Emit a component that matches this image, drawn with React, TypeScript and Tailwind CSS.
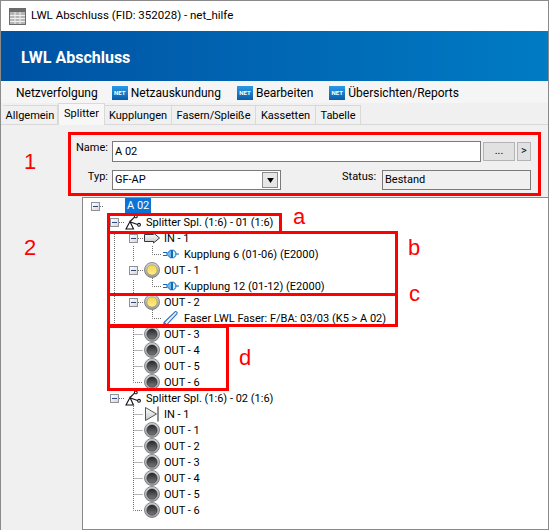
import type { ReactNode } from "react";

type IconKind = "splitter" | "inArrow" | "inTriangle" | "coupling" | "ledOn" | "ledOff" | "fiber";

type TreeRow = {
  level: 1 | 2 | 3;
  label: string;
  icon: IconKind;
  expander?: boolean;
};

const rows: TreeRow[] = [
  { level: 1, label: "Splitter Spl. (1:6) - 01 (1:6)", icon: "splitter", expander: true },
  { level: 2, label: "IN - 1", icon: "inArrow", expander: true },
  { level: 3, label: "Kupplung 6 (01-06) (E2000)", icon: "coupling" },
  { level: 2, label: "OUT - 1", icon: "ledOn", expander: true },
  { level: 3, label: "Kupplung 12 (01-12) (E2000)", icon: "coupling" },
  { level: 2, label: "OUT - 2", icon: "ledOn", expander: true },
  { level: 3, label: "Faser LWL Faser: F/BA: 03/03 (K5 > A 02)", icon: "fiber" },
  { level: 2, label: "OUT - 3", icon: "ledOff" },
  { level: 2, label: "OUT - 4", icon: "ledOff" },
  { level: 2, label: "OUT - 5", icon: "ledOff" },
  { level: 2, label: "OUT - 6", icon: "ledOff" },
  { level: 1, label: "Splitter Spl. (1:6) - 02 (1:6)", icon: "splitter", expander: true },
  { level: 2, label: "IN - 1", icon: "inTriangle" },
  { level: 2, label: "OUT - 1", icon: "ledOff" },
  { level: 2, label: "OUT - 2", icon: "ledOff" },
  { level: 2, label: "OUT - 3", icon: "ledOff" },
  { level: 2, label: "OUT - 4", icon: "ledOff" },
  { level: 2, label: "OUT - 5", icon: "ledOff" },
  { level: 2, label: "OUT - 6", icon: "ledOff" },
];

const indent = { 1: "pl-[27px]", 2: "pl-[46px]", 3: "pl-[80px]" };

function Led({ on }: { on: boolean }) {
  return (
    <svg width="16" height="16" viewBox="0 0 16 16">
      <circle cx="8" cy="8" r="7.5" fill="url(#ledRing)" stroke="#6d6f72" strokeWidth="0.8" />
      <circle cx="8" cy="8" r="5.1" fill={on ? "url(#ledYellow)" : "url(#ledDark)"} stroke={on ? "#a89a45" : "#2b2b2b"} strokeWidth="0.6" />
    </svg>
  );
}

function TreeIcon({ kind }: { kind: IconKind }) {
  switch (kind) {
    case "ledOn":
      return <Led on />;
    case "ledOff":
      return <Led on={false} />;
    case "splitter":
      return (
        <svg width="16" height="16" viewBox="0 0 16 16" fill="none" stroke="#111" strokeWidth="1.1">
          <path d="M1 15 L5 7.5 L8.5 15 Z" fill="#fff" />
          <path d="M5 7.5 L9.5 3.2 M5.5 8 L12.5 10.5" />
          <circle cx="10.8" cy="2.4" r="1.4" fill="#fff" />
          <circle cx="14" cy="10.8" r="1.4" fill="#fff" />
        </svg>
      );
    case "inArrow":
      return (
        <svg width="16" height="16" viewBox="0 0 16 16">
          <path d="M0.5 4.5 H9.5 V3 L15.5 8 L9.5 13 V11.5 H0.5 Z" fill="url(#arrowFill)" stroke="#33363c" strokeWidth="1" />
        </svg>
      );
    case "inTriangle":
      return (
        <svg width="16" height="16" viewBox="0 0 16 16">
          <path d="M1.5 1.5 L12.5 8 L1.5 14.5 Z" fill="url(#arrowFill)" stroke="#555" strokeWidth="1" />
          <path d="M14 0.5 V15.5" stroke="#222" strokeWidth="1" />
        </svg>
      );
    case "coupling":
      return (
        <svg width="16" height="16" viewBox="0 0 16 16">
          <path d="M0 6.5 H4 M0 9.5 H4 M12 8 H16" stroke="#1668b4" strokeWidth="1.1" />
          <path d="M3.5 8 L7.5 4 H8.5 V12 H7.5 Z" fill="#6fbaf0" stroke="#1668b4" strokeWidth="1" />
          <path d="M13 8 C13 5.5 11 4 9.5 4 V12 C11 12 13 10.5 13 8 Z" fill="#d5ecfb" stroke="#1668b4" strokeWidth="1" />
        </svg>
      );
    case "fiber":
      return (
        <svg width="16" height="16" viewBox="0 0 16 16">
          <path d="M1 12.5 L12 1.8 C13 1 14.6 2.4 14 3.6 L3.5 15 H1 Z" fill="#e8f2fb" stroke="#2a6fc0" strokeWidth="1.1" />
          <path d="M1 12.5 L3.5 15" stroke="#2a6fc0" strokeWidth="1.6" />
        </svg>
      );
  }
}

function Expander() {
  return (
    <span className="flex h-[9px] w-[9px] items-center justify-center border border-[#8d9199] bg-linear-to-br from-white to-[#d8d8d8]">
      <span className="h-px w-[5px] bg-[#2c4a80]" />
    </span>
  );
}

function Row({ row }: { row: TreeRow }) {
  return (
    <div className={`flex h-4 items-center ${indent[row.level]}`}>
      {row.level < 3 && (
        <span className="mr-[6px] flex w-[9px] items-center justify-center">{row.expander && <Expander />}</span>
      )}
      <span className="h-4 w-4">
        <TreeIcon kind={row.icon} />
      </span>
      <span className={`translate-y-px whitespace-nowrap ${row.level === 2 ? "ml-[4px]" : "ml-[5px]"}`}>{row.label}</span>
    </div>
  );
}

// dotted tree guides, coordinates are page pixels
function TreeGuides() {
  const d = [
    "M100 206.5H104",
    "M114.5 232V326",
    "M119 222.5H124",
    "M119 398.5H124",
    "M133.5 246V262",
    "M138 238.5H143",
    "M138 270.5H143",
    "M138 302.5H143",
    "M133.5 280V296",
    "M133.5 328V382.5H143",
    "M133.5 334.5H143",
    "M133.5 350.5H143",
    "M133.5 366.5H143",
    "M152.5 246V254.5H162",
    "M152.5 278V286.5H162",
    "M152.5 310V318.5H162",
    "M133.5 406V510.5H143",
    "M133.5 414.5H143",
    "M133.5 430.5H143",
    "M133.5 446.5H143",
    "M133.5 462.5H143",
    "M133.5 478.5H143",
    "M133.5 494.5H143",
  ];
  return (
    <svg className="absolute top-0 left-0" width="466" height="332" viewBox="83 198 466 332" fill="none">
      <defs>
        <linearGradient id="ledRing" x1="0" y1="0" x2="0" y2="1">
          <stop offset="0" stopColor="#d4d6d8" />
          <stop offset="1" stopColor="#9b9da0" />
        </linearGradient>
        <linearGradient id="ledDark" x1="0" y1="0" x2="0" y2="1">
          <stop offset="0" stopColor="#24262a" />
          <stop offset="1" stopColor="#77797d" />
        </linearGradient>
        <linearGradient id="ledYellow" x1="0" y1="0" x2="0" y2="1">
          <stop offset="0" stopColor="#f7d34a" />
          <stop offset="1" stopColor="#fff08f" />
        </linearGradient>
        <linearGradient id="arrowFill" x1="0" y1="0" x2="0" y2="1">
          <stop offset="0" stopColor="#ffffff" />
          <stop offset="1" stopColor="#c4c6c9" />
        </linearGradient>
      </defs>
      {d.map((p) => (
        <path key={p} d={p} stroke="#6f6f6f" strokeDasharray="1 1" />
      ))}
    </svg>
  );
}

function NetBadge() {
  return (
    <span className="mr-[3px] flex h-[14px] w-4 items-center justify-center bg-linear-to-b from-[#2a9be6] to-[#0b5cab] text-[6px] leading-none font-bold text-white">
      NET
    </span>
  );
}

function MenuItem({ children, badge, className }: { children: ReactNode; badge?: boolean; className?: string }) {
  return (
    <span className={`flex items-center ${className ?? ""}`}>
      {badge && <NetBadge />}
      {children}
    </span>
  );
}

function Tab({ label, width, active }: { label: string; width: string; active?: boolean }) {
  if (active) {
    return <div className={`${width} -mb-px flex h-[22px] items-center justify-center border border-b-0 border-[#d9d9d9] bg-[#f7f7f7]`}>{label}</div>;
  }
  return <div className={`${width} flex h-[19px] items-center justify-center border border-l-0 border-b-0 border-[#d9d9d9] bg-[#f0f0f0] pt-0.5`}>{label}</div>;
}

// red annotations painted on top of the screenshot
function Mark({ className, children }: { className: string; children: ReactNode }) {
  return <span className={`absolute font-['Liberation_Sans',sans-serif] text-[22px] leading-none text-[#f00] ${className}`}>{children}</span>;
}

function Box({ className }: { className: string }) {
  return <div className={`pointer-events-none absolute border-[3px] border-[#f00] ${className}`} />;
}

export default function App() {
  return (
    <div className="relative flex h-[530px] w-[549px] flex-col overflow-hidden border-x border-t border-[#8a8a8a] bg-[#f0f0f0] font-['Roboto',sans-serif] text-[11px] text-black">
      {/* title bar */}
      <div className="flex h-[30px] items-center bg-white pl-2 text-[11.5px]">
        <svg width="17" height="17" viewBox="0 0 17 17">
          <rect x="0.5" y="0.5" width="16" height="16" fill="#b5b5b5" stroke="#6b6b6b" />
          <rect x="1" y="1" width="15" height="3" fill="#6b6b6b" />
          <path d="M6 4V16M11 4V16M1 7.5H16M1 10.5H16M1 13.5H16" stroke="#efefef" />
        </svg>
        <span className="ml-[5px]">LWL Abschluss (FID: 352028) - net_hilfe</span>
      </div>

      {/* banner */}
      <div className="flex h-[50px] items-center bg-linear-to-r from-[#0052a3] to-[#007bc4] pt-[3px] pl-5 text-base font-bold text-white">LWL Abschluss</div>

      {/* menu */}
      <div className="flex h-[22px] items-center bg-[#f5f5f5] pt-px pl-[15px] text-xs">
        <MenuItem>Netzverfolgung</MenuItem>
        <MenuItem badge className="ml-[14px]">Netzauskundung</MenuItem>
        <MenuItem badge className="ml-4">Bearbeiten</MenuItem>
        <MenuItem badge className="ml-4">Übersichten/Reports</MenuItem>
      </div>

      {/* tabs */}
      <div className="flex h-[22px] items-end border-b border-[#d9d9d9] pl-[2px]">
        <Tab label="Allgemein" width="w-[55px] border-l" />
        <Tab label="Splitter" width="w-[47px]" active />
        <Tab label="Kupplungen" width="w-[67px]" />
        <Tab label="Fasern/Spleiße" width="w-[84px]" />
        <Tab label="Kassetten" width="w-[60px]" />
        <Tab label="Tabelle" width="w-[45px]" />
      </div>

      {/* form */}
      <div className="flex h-[72px] flex-col gap-2 pt-4 pl-[74px]">
        <div className="flex h-[21px] items-center">
          <span className="w-[33px] -translate-y-[3px] text-right">Name:</span>
          <div className="ml-[4px] flex h-[21px] w-[369px] items-center border border-[#7a7a7a] bg-white pt-0.5 pl-0.5">A 02</div>
          <button className="ml-[2px] flex h-[19px] w-8 items-center justify-center border border-[#b4b4b4] bg-[#e1e1e1]">...</button>
          <button className="ml-[2px] flex h-[19px] w-[14px] items-center justify-center border border-[#b4b4b4] bg-[#e1e1e1]">&gt;</button>
        </div>
        <div className="flex h-5 items-center">
          <span className="w-[33px] -translate-y-[3px] text-right">Typ:</span>
          <div className="ml-[4px] flex h-5 w-[169px] items-center justify-between border border-[#7a7a7a] bg-white pr-0.5 pl-0.5">
            GF-AP
            <span className="flex h-4 w-[16px] items-center justify-center border border-[#8d8d8d] bg-[#e6e6e6]">
              <svg width="7" height="5" viewBox="0 0 8 6"><path d="M0 0H8L4 6Z" fill="#000" /></svg>
            </span>
          </div>
          <span className="ml-[61px] w-[33px] -translate-y-[3px]">Status:</span>
          <div className="ml-[7px] flex h-5 w-[149px] items-center border border-[#7a7a7a] bg-[#f0f0f0] pl-0.5">Bestand</div>
        </div>
      </div>

      {/* tree */}
      <div className="relative ml-[81px] flex-1 border-t border-b border-l border-[#8a8a8a] bg-white">
        <TreeGuides />
        <div className="relative flex h-4 items-center pl-2">
          <Expander />
          <span className="ml-[25px] bg-[#0a74d6] px-0.5 text-white">A 02</span>
        </div>
        <div className="relative">
          {rows.map((row, i) => (
            <Row key={i} row={row} />
          ))}
        </div>
      </div>

      {/* annotations */}
      <Box className="top-[131px] left-[67px] h-[64px] w-[473px]" />
      <Box className="top-[212px] left-[106px] h-[21px] w-[175px]" />
      <Box className="top-[230px] left-[106px] h-[65px] w-[291px]" />
      <Box className="top-[292px] left-[106px] h-[34px] w-[291px]" />
      <Box className="top-[324px] left-[106px] h-[66px] w-[122px]" />
      <Mark className="top-[150px] left-[23px]">1</Mark>
      <Mark className="top-[236px] left-[23px]">2</Mark>
      <Mark className="top-[205px] left-[292px]">a</Mark>
      <Mark className="top-[236px] left-[407px]">b</Mark>
      <Mark className="top-[282px] left-[408px]">c</Mark>
      <Mark className="top-[346px] left-[238px]">d</Mark>
    </div>
  );
}
